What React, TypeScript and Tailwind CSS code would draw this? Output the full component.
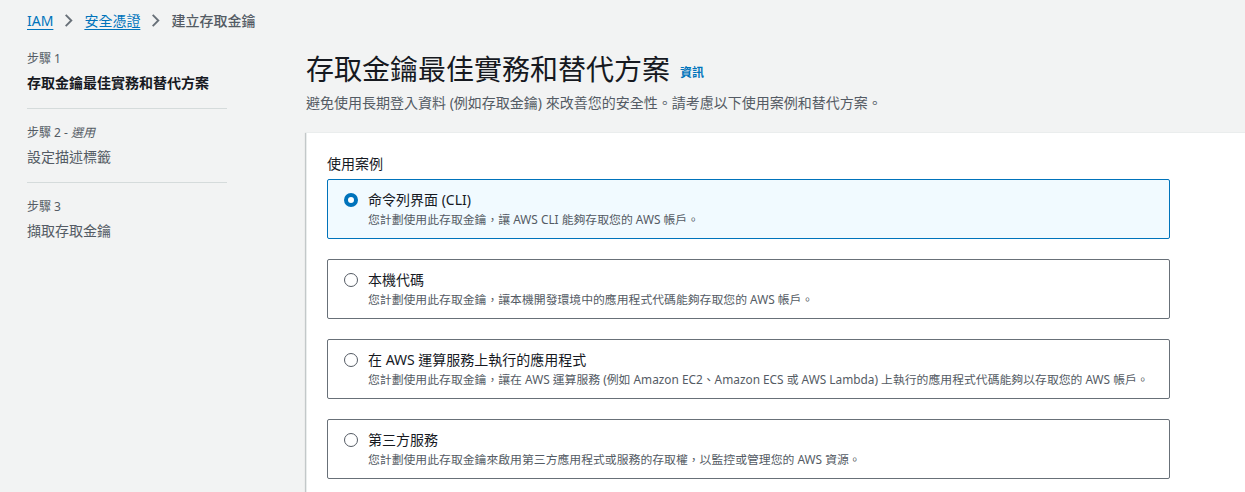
import React from "react";

const options = [
  {
    title: "命令列界面 (CLI)",
    desc: "您計劃使用此存取金鑰，讓 AWS CLI 能夠存取您的 AWS 帳戶。",
  },
  {
    title: "本機代碼",
    desc: "您計劃使用此存取金鑰，讓本機開發環境中的應用程式代碼能夠存取您的 AWS 帳戶。",
  },
  {
    title: "在 AWS 運算服務上執行的應用程式",
    desc: "您計劃使用此存取金鑰，讓在 AWS 運算服務 (例如 Amazon EC2、Amazon ECS 或 AWS Lambda) 上執行的應用程式代碼能夠以存取您的 AWS 帳戶。",
  },
  {
    title: "第三方服務",
    desc: "您計劃使用此存取金鑰來啟用第三方應用程式或服務的存取權，以監控或管理您的 AWS 資源。",
  },
];

const Chevron = () => (
  <svg className="w-[15px] h-[15px] mx-[8px]" viewBox="0 0 16 16" fill="none" stroke="#687078" strokeWidth="2">
    <path d="M5 2l6 6-6 6" />
  </svg>
);

const Step: React.FC<any> = ({ label, optional, title, active, last }) => (
  <div className={last ? "" : "border-b border-[#d5dbdb] pb-[14px] mb-[16px]"}>
    <div className="h-[16px] text-[12px] leading-[16px] text-[#545b64]">
      {label}
      {optional && (
        <>
          {" - "}
          <i>選用</i>
        </>
      )}
    </div>
    <div
      className={`text-[14px] leading-[22px] mt-[5px] ${
        active ? "font-bold text-[#16191f]" : "text-[#545b64]"
      }`}
    >
      {title}
    </div>
  </div>
);

export default function App() {
  return (
    <div
      className="w-[1245px] h-[492px] overflow-hidden bg-[#f2f3f3] text-[#16191f]"
      style={{ fontFamily: '"Noto Sans", "Noto Sans CJK TC", sans-serif' }}
    >
      <div className="flex items-center h-[40px] pl-[27px] text-[14px]">
        <span className="text-[#0073bb] underline underline-offset-[3px]">IAM</span>
        <Chevron />
        <span className="text-[#0073bb] underline underline-offset-[3px]">安全憑證</span>
        <Chevron />
        <span className="text-[#545b64] font-medium">建立存取金鑰</span>
      </div>
      <div className="flex">
        <div className="w-[200px] ml-[27px] mr-[79px] pt-[11px] shrink-0">
          <Step label="步驟 1" title="存取金鑰最佳實務和替代方案" active />
          <Step label="步驟 2" optional title="設定描述標籤" />
          <Step label="步驟 3" title="擷取存取金鑰" last />
        </div>
        <div className="flex-1">
          <div className="flex items-end pt-[11px]">
            <h1 className="text-[28px] leading-[36px] text-[#16191f]">存取金鑰最佳實務和替代方案</h1>
            <span className="ml-[10px] mb-[5px] text-[12px] font-bold text-[#0073bb]">資訊</span>
          </div>
          <p className="text-[14px] leading-[20px] text-[#545b64] mt-[6px]">
            避免使用長期登入資料 (例如存取金鑰) 來改善您的安全性。請考慮以下使用案例和替代方案。
          </p>
          <div className="mt-[19px] bg-white border-t border-l border-[#eaeded] shadow-[0_1px_1px_0_rgba(0,28,36,0.3),1px_1px_1px_0_rgba(0,28,36,0.15),-1px_1px_1px_0_rgba(0,28,36,0.15)] pt-[20px] pl-[20px] pr-[75px] h-[400px]">
            <div className="text-[14px] leading-[22px] text-[#16191f] mb-[4px]">使用案例</div>
            <div className="flex flex-col gap-[20px]">
              {options.map((o, i) => {
                const sel = i === 0;
                return (
                  <div
                    key={i}
                    className={`h-[60px] rounded-[2px] border px-[16px] pt-[9px] flex gap-[10px] ${
                      sel ? "border-[#0073bb] bg-[#f1faff]" : "border-[#687078] bg-white"
                    }`}
                  >
                    <div className="pt-[4px]">
                      {sel ? (
                        <div className="w-[14px] h-[14px] rounded-full border-[4px] border-[#0073bb] bg-white" />
                      ) : (
                        <div className="w-[14px] h-[14px] rounded-full border-[1.5px] border-[#545b64] bg-white" />
                      )}
                    </div>
                    <div className="min-w-0">
                      <div className="text-[14px] leading-[22px] text-[#16191f]">{o.title}</div>
                      <div className="text-[11.85px] leading-[16px] text-[#545b64] whitespace-nowrap">{o.desc}</div>
                    </div>
                  </div>
                );
              })}
            </div>
          </div>
        </div>
      </div>
    </div>
  );
}
